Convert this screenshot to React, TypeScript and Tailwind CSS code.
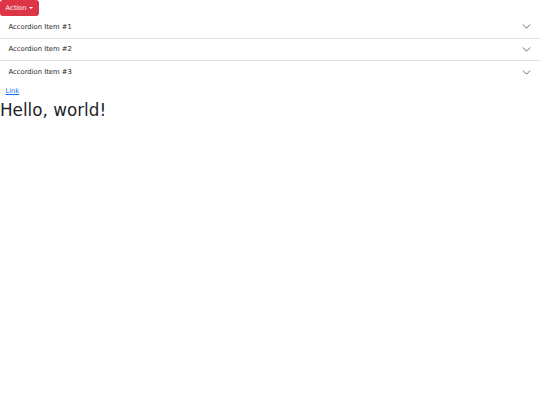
import React from "react";

const Chevron = () => (
  <svg width="9" height="9" viewBox="0 0 16 16" fill="none" className="shrink-0">
    <path d="M2 5l6 6 6-6" stroke="#212529" strokeWidth="1.2" strokeLinecap="round" strokeLinejoin="round" />
  </svg>
);

export default function App() {
  const items = ["Accordion Item #1", "Accordion Item #2", "Accordion Item #3"];
  return (
    <div className="w-[540px] h-[405px] bg-white text-[#212529]" style={{ fontFamily: '"DejaVu Sans", sans-serif' }}>
      <div className="flex">
        <button className="h-[16px] px-[5.5px] bg-[#dc3545] text-white text-[6.7px] rounded-[3px] flex items-center gap-[3px]">
          <span>Action</span>
          <span className="w-0 h-0 border-l-[2.2px] border-r-[2.2px] border-t-[2.5px] border-l-transparent border-r-transparent border-t-white"></span>
        </button>
      </div>
      <div>
        {items.map((t, i) => (
          <div key={t} className={i < items.length - 1 ? "border-b border-[#dee2e6]" : ""}>
            <div className="h-[21.7px] pl-[8.5px] pr-[9px] flex items-center justify-between text-[6.8px]">
              <span>{t}</span>
              <Chevron />
            </div>
          </div>
        ))}
      </div>
      <div className="pt-[3px] pl-[5.5px] h-[13px] flex items-center">
        <a href="#" className="text-[6.7px] text-[#0d6efd] underline">Link</a>
      </div>
      <h1 className="mt-[4px] text-[16.8px] leading-[1.2] font-normal">Hello, world!</h1>
    </div>
  );
}
